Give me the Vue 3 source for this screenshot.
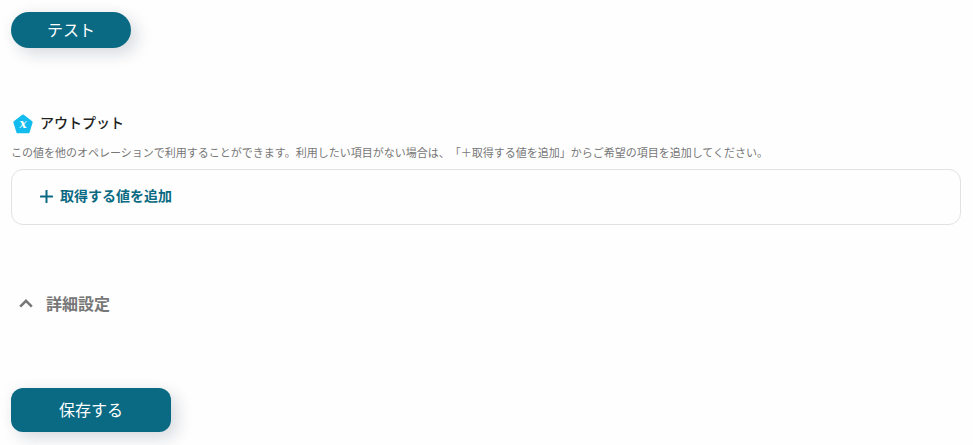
<template>
  <div class="operation-form">
    <button class="test-button" @click="runTest">テスト</button>

    <section class="output">
      <div class="output-title">
        <svg class="output-icon" width="20" height="20" viewBox="0 0 20 20">
          <path
            d="M10 1.9 L18.4 8.2 L15.3 18 H4.7 L1.6 8.2 Z"
            fill="#13bbee"
            stroke="#13bbee"
            stroke-width="2.6"
            stroke-linejoin="round"
          />
          <text x="10" y="14" text-anchor="middle">x</text>
        </svg>
        <h2>アウトプット</h2>
      </div>
      <p class="description">{{ description }}</p>
      <div class="output-card">
        <button class="add-button" @click="addOutput">
          <svg width="13" height="13" viewBox="0 0 13 13">
            <path d="M6.5 0.8 V12.2 M0.8 6.5 H12.2" stroke="currentColor" stroke-width="2" stroke-linecap="round" />
          </svg>
          <span>取得する値を追加</span>
        </button>
      </div>
    </section>

    <button class="detail-toggle" @click="showDetail = !showDetail">
      <svg width="14" height="9" viewBox="0 0 14 9">
        <path d="M1.2 7.7 L7 1.9 L12.8 7.7" fill="none" stroke="currentColor" stroke-width="2.6" />
      </svg>
      <span>詳細設定</span>
    </button>

    <button class="save-button" @click="save">保存する</button>
  </div>
</template>

<script setup>
import { ref } from 'vue'

const description =
  'この値を他のオペレーションで利用することができます。利用したい項目がない場合は、「＋取得する値を追加」からご希望の項目を追加してください。'

const showDetail = ref(false)
const outputs = ref([])

const addOutput = () => {
  outputs.value.push({ name: '' })
}

const runTest = () => {
  console.log('テスト：', outputs.value)
}

const save = () => {
  console.log('保存：', outputs.value)
}
</script>

<style>
body {
  background: #fefefe;
}
</style>

<style scoped>
.operation-form {
  box-sizing: border-box;
  height: 445px;
  padding: 12px 12px 0 11px;
  overflow: hidden;
  display: flex;
  flex-direction: column;
  align-items: flex-start;
  font-family: "Noto Sans CJK JP", sans-serif;
}

button {
  padding: 0;
  border: none;
  background: none;
  font-family: inherit;
  cursor: pointer;
}

.test-button,
.save-button {
  flex-shrink: 0;
  padding-bottom: 2px;
  background: #0a6a83;
  color: #fff;
  font-size: 16px;
  line-height: 24px;
  box-shadow: 6px 6px 16px rgba(14, 30, 62, 0.16), -4px -4px 14px rgba(14, 60, 62, 0.02);
}

.test-button {
  width: 120px;
  height: 36px;
  border-radius: 18px;
}

.save-button {
  width: 160px;
  height: 44px;
  margin-top: 72px;
  border-radius: 12px;
}

.output {
  width: 100%;
  margin-top: 64px;
}

.output-title {
  display: flex;
  align-items: center;
  height: 24px;
  padding-left: 2px;
}

.output-icon text {
  fill: #fff;
  font-family: "DejaVu Serif", serif;
  font-size: 12px;
  font-style: italic;
  font-weight: 700;
}

.output-title h2 {
  margin: 0 0 4px 7px;
  color: #222;
  font-size: 14px;
  font-weight: 500;
  line-height: 22px;
}

.description {
  margin: 8px 0 0;
  color: #777;
  font-size: 11px;
  line-height: 17px;
  white-space: nowrap;
  text-spacing-trim: space-all;
}

.output-card {
  box-sizing: border-box;
  display: flex;
  align-items: center;
  height: 56px;
  margin-top: 8px;
  padding: 0 28px 2px;
  border: 1px solid #e2e2e2;
  border-radius: 12px;
}

.add-button {
  display: flex;
  align-items: center;
  gap: 7px;
  color: #0a6a83;
  font-size: 14px;
  font-weight: 700;
  line-height: 20px;
}

.add-button span {
  padding-bottom: 2px;
}

.add-button svg {
  margin-top: 1px;
}

.detail-toggle {
  display: flex;
  align-items: center;
  gap: 13px;
  height: 24px;
  margin: 66px 0 1px;
  padding-left: 8px;
  color: #777;
  font-size: 16px;
  font-weight: 700;
  line-height: 24px;
}
</style>
